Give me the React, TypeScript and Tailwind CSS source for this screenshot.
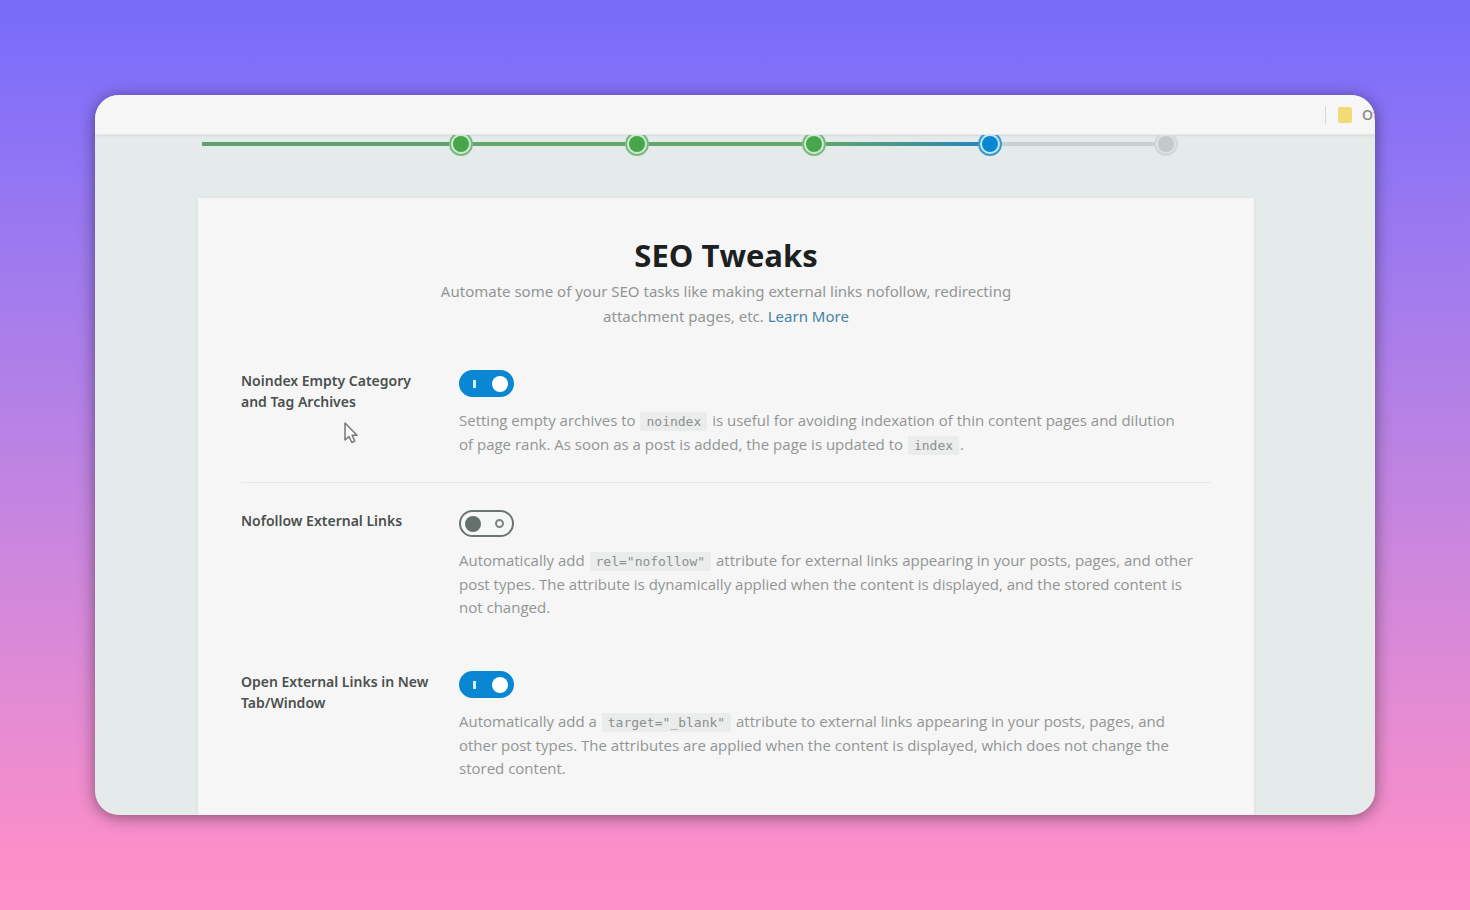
import { useState, type ReactNode } from 'react';

type StepState = 'done' | 'active' | 'todo';

const steps: { name: string; state: StepState; line: string }[] = [
  { name: 'Import', state: 'done', line: 'flex-[247] bg-[#62a06c]' },
  { name: 'Your Site', state: 'done', line: 'flex-[152] bg-[#62a86a]' },
  { name: 'Analytics', state: 'done', line: 'flex-[152] bg-[#62a86a]' },
  { name: 'Optimization', state: 'active', line: 'flex-[152] bg-linear-to-r from-[#5fa66a] to-[#2b86b4]' },
  { name: 'Ready', state: 'todo', line: 'flex-[152] bg-[#c9d0cf]' },
];

const ringStyles: Record<StepState, string> = {
  done: 'border-[#7db884] bg-[#cdeccf]',
  active: 'border-[#3b9acb] bg-[#c3e9f7]',
  todo: 'border-[#d2d7d7] bg-[#dce1e1]',
};

const dotStyles: Record<StepState, string> = {
  done: 'bg-[#46a64c]',
  active: 'bg-[#0a87d3]',
  todo: 'bg-[#c5c9c9]',
};

function Stepper() {
  return (
    <div className="overflow-hidden">
      <ol className="-mt-[3px] mr-[76px] ml-1 flex items-center">
        {steps.map((step) => (
          <li key={step.name} className="contents" aria-label={step.name}>
            <span className={`h-1 ${step.line}`} />
            <span
              className={`flex size-6 shrink-0 items-center justify-center rounded-full border-2 ${ringStyles[step.state]}`}
            >
              <span className={`size-4 rounded-full ${dotStyles[step.state]}`} />
            </span>
          </li>
        ))}
      </ol>
    </div>
  );
}

function Code({ children }: { children: ReactNode }) {
  return (
    <code className="mx-px bg-[#ebecec] px-1.5 py-0.5 font-['DejaVu_Sans_Mono',monospace] text-[13px] text-[#8b908e]">
      {children}
    </code>
  );
}

function Toggle({ id, defaultOn }: { id: string; defaultOn: boolean }) {
  const [on, setOn] = useState(defaultOn);

  return (
    <span
      className={`relative flex h-[27px] w-[55px] items-center justify-between rounded-full border-2 ${
        on ? 'border-[#0a87d3] bg-[#0a87d3] pr-1 pl-3' : 'border-[#6b7572] bg-[#f6f7f7] pr-2 pl-1'
      }`}
    >
      <input
        id={id}
        type="checkbox"
        role="switch"
        checked={on}
        onChange={(e) => setOn(e.target.checked)}
        className="absolute inset-0 cursor-pointer opacity-0"
      />
      {on ? (
        <>
          <span className="h-2 w-[3px] bg-[#d5effc]" />
          <span className="size-4 rounded-full bg-white" />
        </>
      ) : (
        <>
          <span className="size-4 rounded-full bg-[#66716e]" />
          <span className="size-[9px] rounded-full border-2 border-[#7b8482]" />
        </>
      )}
    </span>
  );
}

type SettingProps = {
  id: string;
  label: string;
  on: boolean;
  className?: string;
  children: ReactNode;
};

function Setting({ id, label, on, className = '', children }: SettingProps) {
  return (
    <div className={`flex ${className}`}>
      <label
        htmlFor={id}
        className="w-[218px] shrink-0 pr-6 font-['Noto_Sans',sans-serif] text-sm leading-[21px] font-semibold text-[#4b504e]"
      >
        {label}
      </label>
      <div className="min-w-0 flex-1 pr-3">
        <Toggle id={id} defaultOn={on} />
        <p className="mt-3 text-[15px] leading-[23px] text-[#929594]">{children}</p>
      </div>
    </div>
  );
}

export default function App() {
  return (
    <div className="flex h-screen bg-linear-to-b from-[#7a6cfb] from-2% to-[#ff8fc7] to-97% p-[95px] font-['Open_Sans',sans-serif]">
      <div className="flex min-w-0 flex-1 flex-col overflow-hidden rounded-3xl bg-[#e4ebea] shadow-[0_2px_16px_rgba(0,0,0,0.45)]">
        {/* Bookmarks bar */}
        <header className="flex h-10 shrink-0 items-center justify-end border-b border-[#e6e7e6] bg-[#f6f6f6] shadow-[0_1px_2px_rgba(0,0,0,0.06)]">
          <span className="mr-3 h-[18px] w-px bg-[#d8d8d8]" />
          <button type="button" className="flex w-[37px] items-center gap-2.5 overflow-hidden text-sm font-semibold text-[#888]">
            <span className="h-4 w-3.5 shrink-0 rounded-xs bg-[#f1db77]" />
            <span>Ot</span>
          </button>
        </header>

        <div className="flex min-h-0 flex-1 flex-col pr-[121px] pl-[103px]">
          <Stepper />

          <main className="mt-[42px] flex-1 bg-[#f6f6f6] px-[43px] pt-9 shadow-[0_0_4px_rgba(0,0,0,0.06)]">
            <div className="text-center">
              <h1 className="text-[31px] leading-[42px] font-bold text-[#1c201f]">SEO Tweaks</h1>
              <p className="mx-auto mt-[3px] max-w-[600px] font-['Noto_Sans',sans-serif] text-[15px] leading-[25px] text-[#929594]">
                Automate some of your SEO tasks like making external links nofollow, redirecting attachment pages, etc.{' '}
                <a href="#learn-more" className="text-[#4584a3]">
                  Learn More
                </a>
              </p>
            </div>

            <Setting
              id="noindex-empty"
              label="Noindex Empty Category and Tag Archives"
              on
              className="mt-[41px] border-b border-[#e6e8e8] pb-[25px]"
            >
              Setting empty archives to <Code>noindex</Code> is useful for avoiding indexation of thin content pages and
              dilution of&nbsp;page rank. As soon as a post is added, the page is updated to <Code>index</Code>.
            </Setting>

            <Setting id="nofollow-external" label="Nofollow External Links" on={false} className="mt-[27px]">
              Automatically add <Code>rel="nofollow"</Code> attribute for external links appearing in your posts,
              pages, and other post types. The attribute is dynamically applied when the content is displayed, and the
              stored content is not changed.
            </Setting>

            <Setting id="new-tab" label="Open External Links in New Tab/Window" on className="mt-[52px]">
              Automatically add a <Code>target="_blank"</Code> attribute to external links appearing in your posts,
              pages, and other post types. The attributes are applied when the content is displayed, which does not
              change the stored content.
            </Setting>
          </main>
        </div>
      </div>

      {/* Mouse pointer */}
      <svg className="pointer-events-none absolute top-[421px] left-[343px]" width="17" height="25" viewBox="0 0 17 25" aria-hidden="true">
        <path
          d="M2 2v17l4-3.5 2.8 6 3-1.4-2.7-5.8H14z"
          fill="#fafafa"
          stroke="#777"
          strokeWidth="1.5"
          strokeLinejoin="round"
        />
      </svg>
    </div>
  );
}
